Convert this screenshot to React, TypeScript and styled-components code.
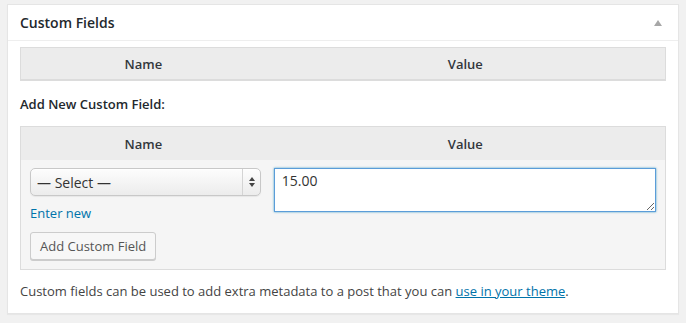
import React from "react";
import styled, { createGlobalStyle } from "styled-components";

const Global = createGlobalStyle`
  html, body { margin: 0; padding: 0; background: #f1f1f1; }
  body {
    font-family: "Open Sans", "Noto Sans", sans-serif;
    font-size: 13px;
    color: #444;
  }
  * { box-sizing: border-box; }
`;

const Page = styled.div`
  padding: 4px 7px;
`;

const Postbox = styled.div`
  background: #fff;
  border: 1px solid #e5e5e5;
  box-shadow: 0 1px 1px rgba(0, 0, 0, 0.04);
`;

const Header = styled.div`
  display: flex;
  align-items: center;
  justify-content: space-between;
  height: 36px;
  padding: 0 12px;
  border-bottom: 1px solid #eee;
`;

const Title = styled.h2`
  margin: 0;
  font-size: 14px;
  font-weight: 600;
  color: #23282d;
  line-height: 1.4;
`;

const Toggle = styled.span`
  width: 0;
  height: 0;
  margin-right: 4px;
  margin-top: 1px;
  border-left: 4px solid transparent;
  border-right: 4px solid transparent;
  border-bottom: 6px solid #a7a7a7;
`;

const Inside = styled.div`
  padding: 6px 12px 12px;
`;

const Table = styled.div`
  border: 1px solid #dcdcdc;
  background: #f5f5f5;
`;

const HeadRow = styled.div<{ $h: number }>`
  display: grid;
  grid-template-columns: 38% 62%;
  background: #ececec;
  height: ${(p) => p.$h}px;
  align-items: center;
`;

const Th = styled.div`
  text-align: center;
  font-weight: 600;
  color: #32373c;
  font-size: 13px;
`;

const ListTable = styled(Table)`
  border-bottom-width: 2px;
`;

const SubTitle = styled.p`
  margin: 14px 0 13px;
  font-weight: 600;
  color: #23282d;
  line-height: 18px;
`;

const BodyRow = styled.div`
  display: grid;
  grid-template-columns: 38% 62%;
  padding: 8px 0 9px;
`;

const Cell = styled.div<{ $pl: number; $pr: number }>`
  display: flex;
  flex-direction: column;
  align-items: flex-start;
  padding: 0 ${(p) => p.$pr}px 0 ${(p) => p.$pl}px;
`;

const SelectWrap = styled.div`
  position: relative;
  width: 231px;
  height: 28px;
`;

const Select = styled.select`
  appearance: none;
  -webkit-appearance: none;
  width: 100%;
  height: 100%;
  margin: 0;
  padding: 0 24px 0 6px;
  border: 1px solid #c8c8c8;
  border-radius: 5px;
  background: linear-gradient(#fdfdfd, #ececec);
  box-shadow: inset 0 1px 0 #fff, 0 1px 1px rgba(0, 0, 0, 0.06);
  font-family: "Open Sans", "Noto Sans", sans-serif;
  font-size: 14px;
  color: #333;
  outline: none;
`;

const Arrows = styled.span`
  position: absolute;
  top: 1px;
  right: 1px;
  bottom: 1px;
  width: 18px;
  border-left: 1px solid #d4d4d4;
  display: flex;
  flex-direction: column;
  align-items: center;
  justify-content: center;
  gap: 2px;
  pointer-events: none;
`;

const Tri = styled.span<{ $up?: boolean }>`
  width: 0;
  height: 0;
  border-left: 3px solid transparent;
  border-right: 3px solid transparent;
  ${(p) =>
    p.$up ? "border-bottom: 4px solid #444;" : "border-top: 4px solid #444;"}
`;

const Link = styled.a`
  color: #0073aa;
  text-decoration: none;
  line-height: 18px;
  margin: 8px 0 10px;
  font-size: 13px;
`;

const Button = styled.button`
  height: 28px;
  padding: 0 9px 1px;
  border: 1px solid #ccc;
  border-radius: 3px;
  background: #f7f7f7;
  box-shadow: 0 1px 0 #ccc;
  color: #555;
  font-family: "Open Sans", "Noto Sans", sans-serif;
  font-size: 13px;
  cursor: pointer;
`;

const TextArea = styled.textarea`
  width: 100%;
  height: 44px;
  margin: 0;
  padding: 3px 7px;
  border: 1px solid #5b9dd9;
  border-radius: 0;
  box-shadow: 0 0 2px rgba(30, 140, 190, 0.8);
  background: #fff;
  font-family: "Open Sans", "Noto Sans", sans-serif;
  font-size: 14px;
  line-height: 18px;
  color: #333;
  outline: none;
`;

const Note = styled.p`
  margin: 11px 0 0;
  line-height: 20px;
  color: #444;

  a {
    color: #0073aa;
    text-decoration: underline;
  }
`;

export default function App() {
  return (
    <Page>
      <Global />
      <Postbox>
        <Header>
          <Title>Custom Fields</Title>
          <Toggle />
        </Header>
        <Inside>
          <ListTable>
            <HeadRow $h={31}>
              <Th>Name</Th>
              <Th>Value</Th>
            </HeadRow>
          </ListTable>
          <SubTitle>Add New Custom Field:</SubTitle>
          <Table>
            <HeadRow $h={33}>
              <Th>Name</Th>
              <Th>Value</Th>
            </HeadRow>
            <BodyRow>
              <Cell $pl={9} $pr={10}>
                <SelectWrap>
                  <Select defaultValue="">
                    <option value="">— Select —</option>
                  </Select>
                  <Arrows>
                    <Tri $up />
                    <Tri />
                  </Arrows>
                </SelectWrap>
                <Link href="#">Enter new</Link>
                <Button>Add Custom Field</Button>
              </Cell>
              <Cell $pl={8} $pr={9}>
                <TextArea defaultValue="15.00" />
              </Cell>
            </BodyRow>
          </Table>
          <Note>
            Custom fields can be used to add extra metadata to a post that you
            can <a href="#">use in your theme</a>.
          </Note>
        </Inside>
      </Postbox>
    </Page>
  );
}
